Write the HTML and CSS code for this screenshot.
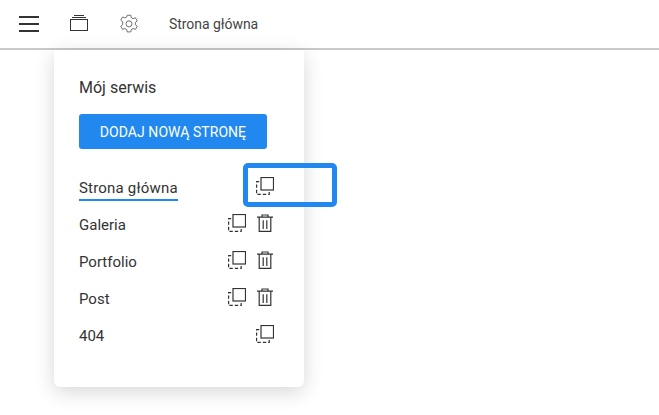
FILE: index.html
```html
<!DOCTYPE html>
<html lang="pl">
<head>
    <meta charset="UTF-8">
    <meta name="viewport" content="width=device-width, initial-scale=1.0">
    <title>Strona główna</title>
    <link rel="stylesheet" href="styles.css">
</head>
<body>
    <svg class="sprites" width="0" height="0">
        <symbol id="icon-copy" viewBox="0 0 18 18">
            <rect x="5" y="0.5" width="12.5" height="12.5" fill="none" stroke="#333" stroke-width="1.2"/>
            <path d="M3.2 4.6H0.6V17.4H13.2V15" fill="none" stroke="#333" stroke-width="1.2" stroke-dasharray="3.4 2"/>
        </symbol>
        <symbol id="icon-trash" viewBox="0 0 18 18">
            <path d="M1 3.2H17M6 3V1H12V3M3.2 3.2V17.4H14.8V3.2M7.2 6.2V15M10.8 6.2V15" fill="none" stroke="#333" stroke-width="1.2"/>
        </symbol>
    </svg>

    <header class="topbar">
        <button class="menu-btn" aria-label="Menu"><span></span><span></span><span></span></button>
        <svg class="tabs-icon" width="20" height="18" viewBox="0 0 20 18">
            <path d="M1.5 6.5H18.5V17.5H1.5ZM3 4.5H17M5 2.5H15" fill="none" stroke="#333" stroke-width="1" shape-rendering="crispEdges"/>
        </svg>
        <svg class="gear-icon" width="20" height="20" viewBox="0 0 24 24">
            <path d="M9.8 1.5h4.4l.5 3 2.2 1.1 2.8-1.1 2.2 3.8-2.3 1.9v2.6l2.3 1.9-2.2 3.8-2.8-1.1-2.2 1.3-.5 2.8H9.8l-.5-2.8-2.2-1.3-2.8 1.1-2.2-3.8 2.3-1.9V9.3L2.1 7.4l2.2-3.8 2.8 1.1 2.2-1.1z" fill="none" stroke="#555" stroke-width="1" stroke-linejoin="round"/>
            <circle cx="12" cy="11.8" r="3.6" fill="none" stroke="#555" stroke-width="1"/>
        </svg>
        <span class="topbar-title">Strona główna</span>
    </header>

    <aside class="panel">
        <h2 class="panel-title">Mój serwis</h2>
        <button class="add-btn">DODAJ NOWĄ STRONĘ</button>
        <ul class="pages">
            <li class="page">
                <span class="page-name active">Strona główna</span>
                <span class="page-actions"><svg class="icon"><use href="#icon-copy"/></svg></span>
            </li>
            <li class="page">
                <span class="page-name">Galeria</span>
                <span class="page-actions"><svg class="icon"><use href="#icon-copy"/></svg><svg class="icon"><use href="#icon-trash"/></svg></span>
            </li>
            <li class="page">
                <span class="page-name">Portfolio</span>
                <span class="page-actions"><svg class="icon"><use href="#icon-copy"/></svg><svg class="icon"><use href="#icon-trash"/></svg></span>
            </li>
            <li class="page">
                <span class="page-name">Post</span>
                <span class="page-actions"><svg class="icon"><use href="#icon-copy"/></svg><svg class="icon"><use href="#icon-trash"/></svg></span>
            </li>
            <li class="page">
                <span class="page-name">404</span>
                <span class="page-actions"><svg class="icon"><use href="#icon-copy"/></svg></span>
            </li>
        </ul>
    </aside>

    <div class="highlight"></div>
</body>
</html>
```

FILE: styles.css
```css
body {
    font-family: Roboto, "Liberation Sans", sans-serif;
    background-color: #fff;
    color: #333;
    margin: 0;
    height: 415px;
    overflow: hidden;
}

.sprites {
    display: block;
    height: 0;
}

.topbar {
    display: flex;
    align-items: center;
    height: 48px;
    border-bottom: 2px solid #c9c9c9;
    padding-left: 19px;
}

.menu-btn {
    display: flex;
    flex-direction: column;
    gap: 5px;
    width: 20px;
    padding: 0;
    border: none;
    background: none;
}

.menu-btn span {
    display: block;
    height: 2px;
    background-color: #333;
}

.tabs-icon {
    margin-left: 30px;
    margin-top: -4px;
}

.gear-icon {
    margin-left: 30px;
    margin-top: -1px;
}

.topbar-title {
    margin-left: 30px;
    font-size: 14px;
    letter-spacing: -0.05px;
    color: #444;
}

.panel {
    width: 250px;
    height: 337px;
    margin-left: 54px;
    box-sizing: border-box;
    padding: 28px 30px 0 25px;
    background-color: #fff;
    border-radius: 0 0 6px 6px;
    box-shadow: 0 5px 20px rgba(0, 0, 0, 0.16);
}

.panel-title {
    margin: 0;
    font-size: 16px;
    font-weight: 400;
    line-height: 20px;
}

.add-btn {
    display: block;
    width: 188px;
    height: 35px;
    margin-top: 16px;
    padding: 0;
    border: none;
    border-radius: 3px;
    background-color: #2188f0;
    color: #fff;
    font-family: inherit;
    font-size: 14px;
    letter-spacing: 0.05px;
}

.pages {
    list-style: none;
    margin: 20px 0 0;
    padding: 0;
}

.page {
    display: flex;
    align-items: center;
    justify-content: space-between;
    height: 37px;
    font-size: 15px;
}

.page-name {
    padding: 2px 0;
}

.page-name.active {
    padding-top: 4px;
    letter-spacing: 0.2px;
    border-bottom: 2px solid #2188f0;
}

.page-actions {
    display: flex;
    gap: 10px;
    margin-top: -4px;
}

.icon {
    display: block;
    width: 18px;
    height: 18px;
}

.highlight {
    position: absolute;
    left: 243px;
    top: 163px;
    width: 94px;
    height: 44px;
    box-sizing: border-box;
    border: 5px solid #2188f0;
    border-radius: 5px;
}
```
